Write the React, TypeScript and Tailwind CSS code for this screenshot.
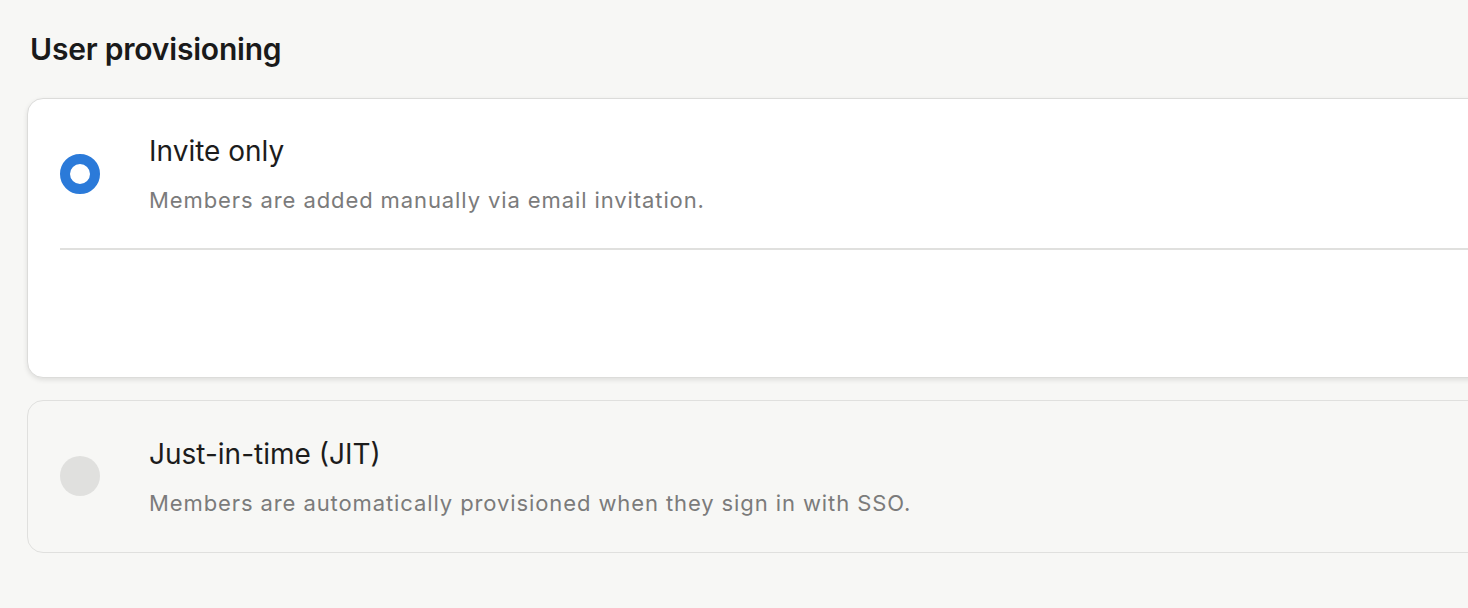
export default function App() {
  const font = { fontFamily: 'Inter, "Noto Sans", sans-serif' };
  return (
    <div className="w-full min-h-[608px] overflow-hidden bg-[#f7f7f5]" style={font}>
      <div className="pl-[27px] mr-[-60px] pt-[29px]">
        <h2 className="pl-[3px] text-[30px] leading-[40px] font-semibold text-[#1a1a1a] tracking-[-0.2px]">
          User provisioning
        </h2>
        <div className="mt-[29px] flex flex-col gap-[22px]">
          <div className="rounded-[16px] border border-[#dcdcda] bg-white shadow-[0_2px_5px_rgba(0,0,0,0.10)]">
            <div className="flex h-[149px] items-center pl-[32px]">
              <div className="h-[40px] w-[40px] rounded-full border-[10px] border-[#2b7ad9] bg-white" />
              <div className="ml-[49px] flex flex-col">
                <div className="text-[28px] leading-[36px] text-[#1c1c1c]">Invite only</div>
                <div className="mt-[17px] text-[22px] leading-[28px] tracking-[0.9px] text-[#7b7b7b]">
                  Members are added manually via email invitation.
                </div>
              </div>
            </div>
            <div className="ml-[32px] h-[2px] bg-[#e0e0de]" />
            <div className="h-[127px]" />
          </div>
          <div className="rounded-[16px] border border-[#e0e0de] bg-[#f7f7f5]">
            <div className="flex h-[150px] items-center pl-[32px] pb-[0px]">
              <div className="h-[40px] w-[40px] rounded-full bg-[#e0e0de]" />
              <div className="ml-[49px] flex flex-col">
                <div className="text-[28px] leading-[36px] text-[#1c1c1c]">Just-in-time (JIT)</div>
                <div className="mt-[17px] text-[22px] leading-[28px] tracking-[0.9px] text-[#7b7b7b]">
                  Members are automatically provisioned when they sign in with SSO.
                </div>
              </div>
            </div>
            <div className="h-[1px]" />
          </div>
        </div>
      </div>
    </div>
  );
}
